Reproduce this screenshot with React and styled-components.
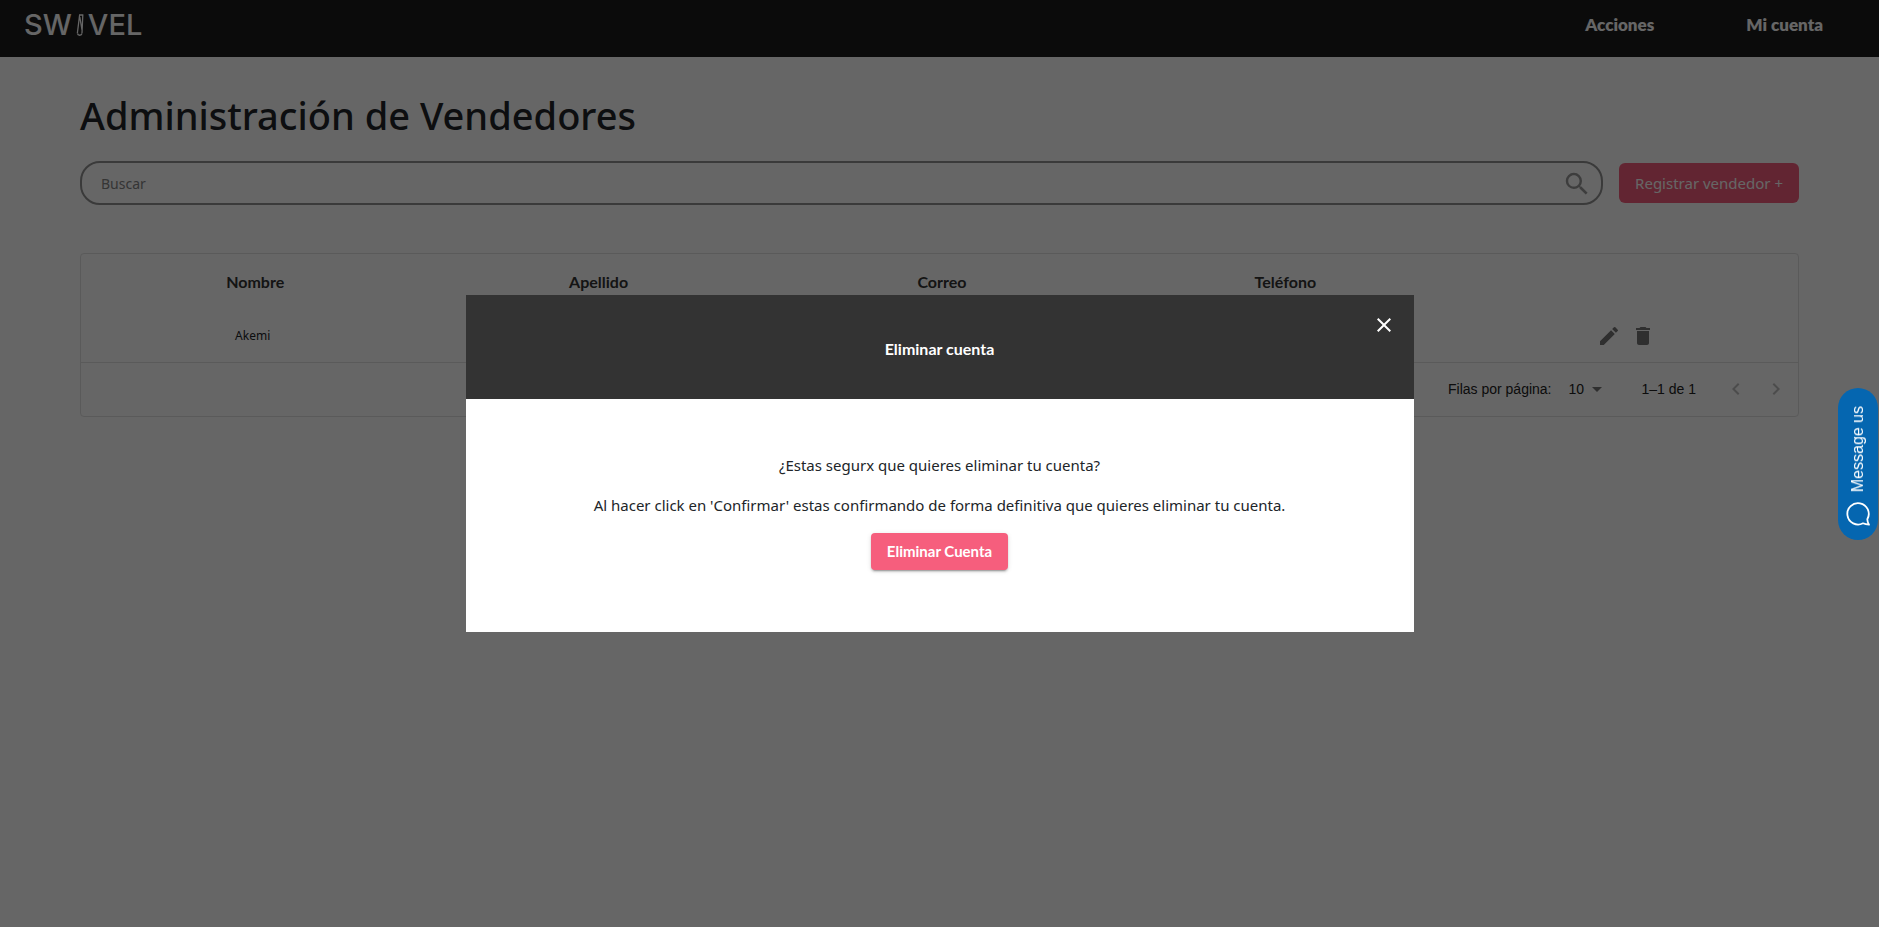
import React from "react";
import styled, { createGlobalStyle } from "styled-components";
import {
  MdArrowDropDown,
  MdChevronLeft,
  MdChevronRight,
  MdClose,
  MdDelete,
  MdEdit,
  MdSearch,
} from "react-icons/md";

const fonts = {
  body: '"Noto Sans", "Open Sans", sans-serif',
  brand: 'Lato, "Open Sans", sans-serif',
  logo: "Inter, sans-serif",
  plain: '"Liberation Sans", Arial, sans-serif',
};

const GlobalStyle = createGlobalStyle`
  *, *::before, *::after { box-sizing: border-box; }
  body {
    margin: 0;
    background: #fff;
    color: #212529;
    font-family: ${fonts.body};
    font-size: 15px;
    line-height: 24px;
  }
  button, input, select { font: inherit; color: inherit; margin: 0; }
  button { cursor: pointer; }
`;

const Navbar = styled.header`
  display: flex;
  justify-content: space-between;
  align-items: center;
  height: 57px;
  padding: 0 56px 8px 24px;
  background: #1c1c1c;
  color: #fff;
`;

const Logo = styled.a`
  display: flex;
  align-items: center;
  gap: 4px;
  color: inherit;
  text-decoration: none;
  font-family: ${fonts.logo};
  font-size: 29px;
  font-weight: 500;
  line-height: 32px;
`;

const Menu = styled.nav`
  display: flex;
  gap: 92px;
`;

const MenuLink = styled.a`
  color: inherit;
  text-decoration: none;
  font-family: ${fonts.brand};
  font-size: 17px;
  font-weight: 800;
`;

const Page = styled.main`
  padding: 34px 80px;
`;

const Title = styled.h1`
  margin: 0 0 22px;
  font-size: 38px;
  line-height: 48px;
  font-weight: 500;
`;

const Toolbar = styled.div`
  display: flex;
  align-items: center;
  gap: 16px;
  margin-bottom: 48px;
`;

const SearchBox = styled.label`
  flex: 1;
  display: flex;
  align-items: center;
  height: 44px;
  padding: 2px 9px 0 19px;
  border: 2px solid #919191;
  border-radius: 20px;
  color: #999;
`;

const SearchInput = styled.input`
  flex: 1;
  min-width: 0;
  padding: 0;
  border: 0;
  outline: 0;
  background: transparent;
  font-size: 14px;
  &::placeholder { color: #848484; opacity: 1; }
`;

const PrimaryButton = styled.button`
  height: 40px;
  padding: 0 16px;
  border: 0;
  border-radius: 6px;
  background: #f65e7d;
  color: #fff;
`;

const TableCard = styled.section`
  border: 1px solid #e0e0e0;
  border-radius: 4px;
`;

const Table = styled.table`
  width: 100%;
  table-layout: fixed;
  border-collapse: collapse;
  text-align: center;
`;

const HeadCell = styled.th`
  height: 56px;
  padding: 0 0 0 5px;
  color: #333;
  font-family: ${fonts.brand};
  font-size: 16px;
  font-weight: 700;
`;

const Cell = styled.td`
  height: 52px;
  padding: 0;
  border-bottom: 1px solid #e0e0e0;
  font-size: 12px;
`;

const RowActions = styled.div`
  display: flex;
  justify-content: center;
  gap: 10px;
`;

const IconButton = styled.button`
  display: flex;
  align-items: center;
  justify-content: center;
  width: ${({ $size = 24 }) => $size}px;
  height: ${({ $size = 24 }) => $size}px;
  padding: 0;
  border: 0;
  background: transparent;
  color: ${({ $tone = "#757575" }) => $tone};
`;

const Pagination = styled.div`
  display: flex;
  align-items: center;
  justify-content: flex-end;
  height: 53px;
  padding-right: 2px;
  color: #212121;
  font-family: ${fonts.plain};
  font-size: 14px;
`;

const RowsLabel = styled.label`
  display: flex;
  align-items: center;
  gap: 17px;
`;

const RowsPicker = styled.span`
  display: flex;
  align-items: center;
  color: #212121;
  svg { margin-left: -24px; color: #757575; pointer-events: none; }
`;

const RowsSelect = styled.select`
  appearance: none;
  width: 40px;
  padding: 0;
  border: 0;
  background: transparent;
`;

const Range = styled.span`
  margin: 0 20px 0 33px;
`;

const Backdrop = styled.div`
  position: fixed;
  inset: 0;
  display: flex;
  align-items: center;
  justify-content: center;
  background: rgba(0, 0, 0, 0.6);
`;

const Dialog = styled.section`
  width: 948px;
  max-width: 100%;
  background: #fff;
  text-align: center;
`;

const DialogHeader = styled.header`
  position: relative;
  display: flex;
  align-items: center;
  justify-content: center;
  height: 104px;
  padding-top: 4px;
  background: #333;
  color: #fff;
`;

const DialogTitle = styled.h2`
  margin: 0;
  font-family: ${fonts.brand};
  font-size: 16px;
  line-height: 24px;
  font-weight: 700;
`;

const CloseSlot = styled.div`
  position: absolute;
  top: 6px;
  right: 6px;
`;

const DialogBody = styled.div`
  padding: 54px 24px 62px;
`;

const Message = styled.p`
  margin: 0 0 16px;
`;

const ConfirmButton = styled(PrimaryButton)`
  display: block;
  height: 37px;
  margin: 0 auto;
  padding-bottom: 2px;
  border-radius: 4px;
  font-family: ${fonts.brand};
  font-size: 15px;
  font-weight: 700;
  box-shadow: 0 3px 1px -2px rgba(0, 0, 0, 0.2), 0 2px 2px rgba(0, 0, 0, 0.14),
    0 1px 5px rgba(0, 0, 0, 0.12);
`;

const ChatButton = styled.button`
  position: fixed;
  right: 1px;
  top: 50%;
  transform: translateY(-50%);
  display: flex;
  flex-direction: column;
  align-items: center;
  justify-content: space-between;
  width: 40px;
  height: 152px;
  padding: 18px 0 14px;
  border: 0;
  border-radius: 20px;
  background: #0566b0;
  color: #fff;
  font-family: ${fonts.plain};
  font-size: 16px;
`;

const ChatLabel = styled.span`
  writing-mode: vertical-rl;
  transform: rotate(180deg);
`;

function Needle() {
  return (
    <svg width="8" height="24" viewBox="0 0 8 24" fill="none" stroke="currentColor" aria-hidden="true">
      <path d="M3 2h4.4M3.6 2 1.4 20M6.8 2 6 20M3.8 4l2.2 13" strokeWidth="1.3" />
      <path d="M1.4 20.4c.6 2.4 4 2.4 4.6 0" strokeWidth="1.5" />
    </svg>
  );
}

function ChatBubble() {
  return (
    <svg width="24" height="24" viewBox="0 0 24 24" fill="none" stroke="currentColor" strokeWidth="1.8" strokeLinejoin="round" aria-hidden="true">
      <path d="M21.3 17.2A10.7 10.7 0 1 0 17 21.3Q19.5 22.4 23 22.6Q21.4 20 21.3 17.2Z" />
    </svg>
  );
}

const columns = ["Nombre", "Apellido", "Correo", "Teléfono", ""];

export default function App() {
  return (
    <>
      <GlobalStyle />
      <Navbar>
        <Logo href="#" aria-label="Swivel">
          <span>SW</span>
          <Needle />
          <span>VEL</span>
        </Logo>
        <Menu>
          <MenuLink href="#acciones">Acciones</MenuLink>
          <MenuLink href="#cuenta">Mi cuenta</MenuLink>
        </Menu>
      </Navbar>

      <Page>
        <Title>Administración de Vendedores</Title>
        <Toolbar>
          <SearchBox>
            <SearchInput type="text" placeholder="Buscar" aria-label="Buscar" />
            <MdSearch size={30} />
          </SearchBox>
          <PrimaryButton type="button">Registrar vendedor +</PrimaryButton>
        </Toolbar>

        <TableCard>
          <Table>
            <thead>
              <tr>
                {columns.map((name) => (
                  <HeadCell key={name} scope="col">{name}</HeadCell>
                ))}
              </tr>
            </thead>
            <tbody>
              <tr>
                <Cell>Akemi</Cell>
                <Cell />
                <Cell />
                <Cell />
                <Cell>
                  <RowActions>
                    <IconButton type="button" aria-label="Editar"><MdEdit size={24} /></IconButton>
                    <IconButton type="button" aria-label="Eliminar"><MdDelete size={24} /></IconButton>
                  </RowActions>
                </Cell>
              </tr>
            </tbody>
          </Table>
          <Pagination>
            <RowsLabel>
              Filas por página:
              <RowsPicker>
                <RowsSelect defaultValue="10">
                  <option>10</option>
                </RowsSelect>
                <MdArrowDropDown size={24} />
              </RowsPicker>
            </RowsLabel>
            <Range>1–1 de 1</Range>
            <IconButton type="button" $size={40} $tone="#bdbdbd" aria-label="Página anterior">
              <MdChevronLeft size={24} />
            </IconButton>
            <IconButton type="button" $size={40} $tone="#bdbdbd" aria-label="Página siguiente">
              <MdChevronRight size={24} />
            </IconButton>
          </Pagination>
        </TableCard>
      </Page>

      <Backdrop>
        <Dialog role="dialog" aria-modal="true" aria-labelledby="dialog-title">
          <DialogHeader>
            <DialogTitle id="dialog-title">Eliminar cuenta</DialogTitle>
            <CloseSlot>
              <IconButton type="button" $size={48} $tone="#fff" aria-label="Cerrar">
                <MdClose size={24} />
              </IconButton>
            </CloseSlot>
          </DialogHeader>
          <DialogBody>
            <Message>¿Estas segurx que quieres eliminar tu cuenta?</Message>
            <Message>
              Al hacer click en 'Confirmar' estas confirmando de forma definitiva que quieres
              eliminar tu cuenta.
            </Message>
            <ConfirmButton type="button">Eliminar Cuenta</ConfirmButton>
          </DialogBody>
        </Dialog>
      </Backdrop>

      <ChatButton type="button">
        <ChatLabel>Message us</ChatLabel>
        <ChatBubble />
      </ChatButton>
    </>
  );
}
